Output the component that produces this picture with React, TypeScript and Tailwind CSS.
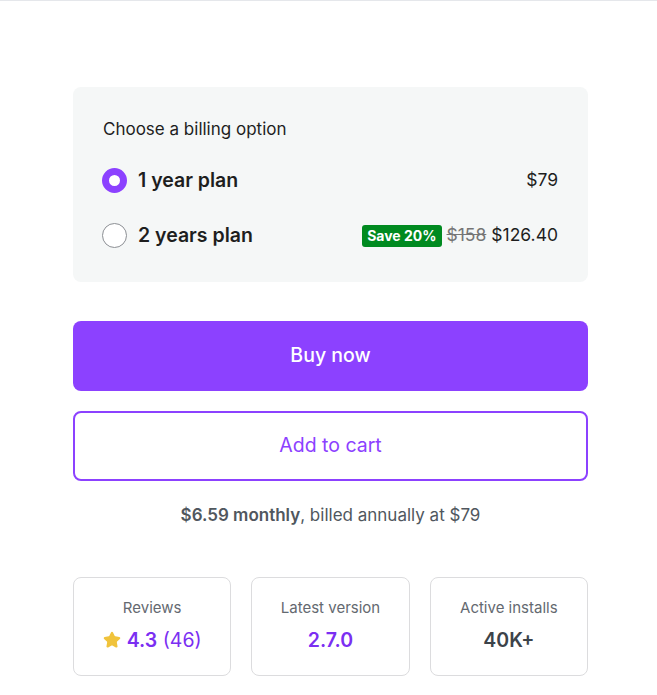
import { Star } from "lucide-react";
import { useState } from "react";

const plans = [
  { id: "1y", label: "1 year plan", price: "$79" },
  { id: "2y", label: "2 years plan", price: "$126.40", old: "$158", save: "Save 20%" },
];

const stats = [
  { label: "Reviews", kind: "reviews" },
  { label: "Latest version", value: "2.7.0", color: "text-[#7b2ff2]" },
  { label: "Active installs", value: "40K+", color: "text-[#3c434a]" },
];

export default function App() {
  const [plan, setPlan] = useState("1y");

  return (
    <div
      className="min-h-screen bg-white border-t border-[#e5e7eb]"
      style={{ fontFamily: "Inter, 'Noto Sans', sans-serif" }}
    >
      <div className="w-[515px] ml-[73px] pt-[86px]">
        <div className="bg-[#f5f7f7] rounded-lg px-[30px] pt-[32px] pb-[34px]">
          <p className="text-[17px] leading-5 text-[#1e1e1e]">Choose a billing option</p>
          <div className="mt-[29px] flex flex-col gap-[30px]">
            {plans.map((p) => (
              <label key={p.id} className="flex items-center justify-between cursor-pointer h-[25px]">
                <div className="flex items-center gap-[11px]">
                  <input
                    type="radio"
                    name="plan"
                    className="sr-only"
                    checked={plan === p.id}
                    onChange={() => setPlan(p.id)}
                  />
                  <span
                    className={`-ml-px w-[25px] h-[25px] rounded-full ${
                      plan === p.id
                        ? "border-[7px] border-[#8c41ff] bg-white"
                        : "border border-[#8c8f94] bg-white"
                    }`}
                  />
                  <span className="text-[19.5px] font-semibold text-[#1e1e1e]">{p.label}</span>
                </div>
                <div className="flex items-center gap-[5px] text-[17.5px] text-[#1e1e1e]">
                  {p.save && (
                    <span className="bg-[#008a20] text-white text-[14px] font-bold rounded-[3px] px-[5px] leading-[22px]">
                      {p.save}
                    </span>
                  )}
                  {p.old && <span className="line-through text-[#757575]">{p.old}</span>}
                  <span>{p.price}</span>
                </div>
              </label>
            ))}
          </div>
        </div>

        <button className="mt-[39px] w-full h-[70px] rounded-lg bg-[#8c41ff] text-white text-[19.5px] font-medium">
          Buy now
        </button>
        <button className="mt-[20px] w-full h-[70px] rounded-lg border-2 border-[#8c41ff] bg-white text-[#8c41ff] text-[19.5px]">
          Add to cart
        </button>

        <p className="mt-[22px] text-center text-[17px] text-[#50575e]">
          <span className="font-semibold">$6.59 monthly</span>, billed annually at $79
        </p>

        <div className="mt-[48px] grid grid-cols-3 gap-[20px]">
          {stats.map((s) => (
            <div
              key={s.label}
              className="h-[99px] border border-[#dcdcde] rounded-lg flex flex-col items-center justify-center gap-[6px]"
            >
              <span className="text-[15px] text-[#646970]">{s.label}</span>
              {s.kind === "reviews" ? (
                <span className="flex items-center gap-[6px] text-[19.5px] text-[#7b2ff2]">
                  <Star size={18} fill="#f0c33c" stroke="#f0c33c" />
                  <span>
                    <span className="font-semibold">4.3</span> (46)
                  </span>
                </span>
              ) : (
                <span className={`text-[19.5px] font-semibold ${s.color}`}>{s.value}</span>
              )}
            </div>
          ))}
        </div>
      </div>
    </div>
  );
}
